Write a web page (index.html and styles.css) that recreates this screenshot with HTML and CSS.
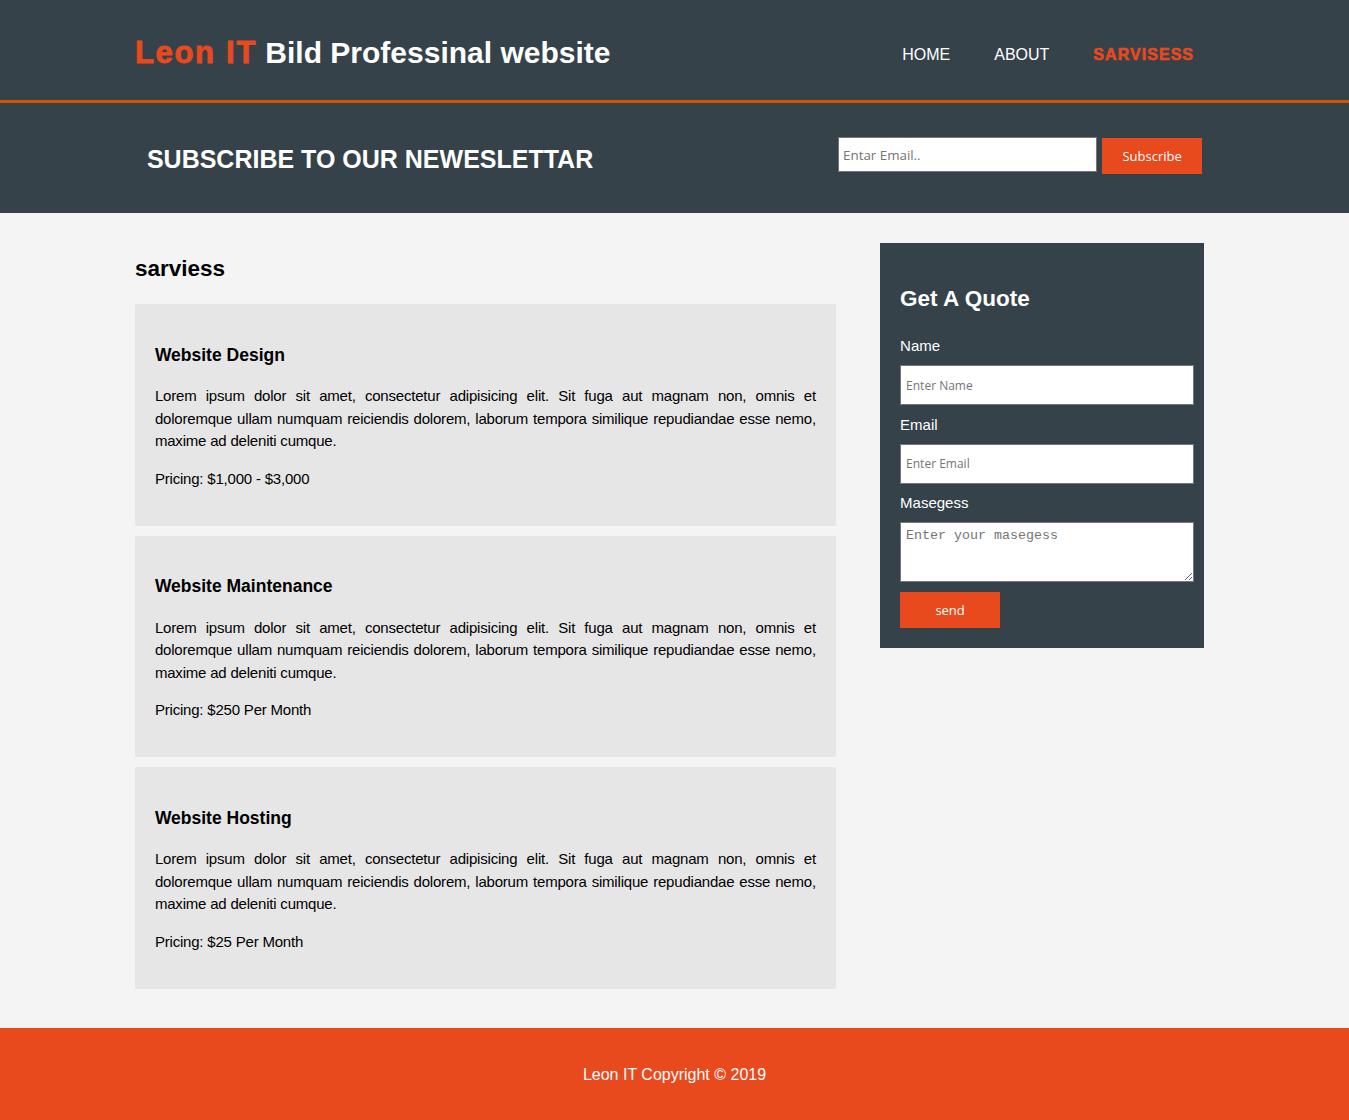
FILE: index.html
```
<!DOCTYPE html>
<html lang="en">
<head>
<meta charset="utf-8">
<title>Leon IT | Sarvisess</title>
<link rel="stylesheet" href="styles.css">
</head>
<body>
<header class="site-header">
  <div class="container header-inner">
    <h1 class="branding"><span class="highlight">Leon IT</span> Bild Professinal website</h1>
    <nav class="nav">
      <ul class="nav-list">
        <li><a href="#">Home</a></li>
        <li><a href="#">About</a></li>
        <li class="current"><a href="#">Sarvisess</a></li>
      </ul>
    </nav>
  </div>
</header>

<section class="newsletter">
  <div class="newsletter-inner">
    <h1 class="newsletter-title">SUBSCRIBE TO OUR NEWESLETTAR</h1>
    <form class="newsletter-form">
      <input class="newsletter-input" type="email" placeholder="Entar Email..">
      <button class="btn-subscribe" type="button">Subscribe</button>
    </form>
  </div>
</section>

<section class="main">
  <div class="container main-inner">
    <article class="main-col">
      <h1 class="page-title">sarviess</h1>
      <ul class="services">
        <li class="service">
          <h3 class="service-title">Website Design</h3>
          <p class="service-text">Lorem ipsum dolor sit amet, consectetur adipisicing elit. Sit fuga aut magnam non, omnis et doloremque ullam numquam reiciendis dolorem, laborum tempora similique repudiandae esse nemo, maxime ad deleniti cumque.</p>
          <p class="service-price">Pricing: $1,000 - $3,000</p>
        </li>
        <li class="service">
          <h3 class="service-title">Website Maintenance</h3>
          <p class="service-text">Lorem ipsum dolor sit amet, consectetur adipisicing elit. Sit fuga aut magnam non, omnis et doloremque ullam numquam reiciendis dolorem, laborum tempora similique repudiandae esse nemo, maxime ad deleniti cumque.</p>
          <p class="service-price">Pricing: $250 Per Month</p>
        </li>
        <li class="service">
          <h3 class="service-title">Website Hosting</h3>
          <p class="service-text">Lorem ipsum dolor sit amet, consectetur adipisicing elit. Sit fuga aut magnam non, omnis et doloremque ullam numquam reiciendis dolorem, laborum tempora similique repudiandae esse nemo, maxime ad deleniti cumque.</p>
          <p class="service-price">Pricing: $25 Per Month</p>
        </li>
      </ul>
    </article>

    <aside class="sidebar">
      <div class="dark">
        <h1 class="quote-title">Get A Quote</h1>
        <form class="quote">
          <label class="quote-label">Name</label>
          <input class="quote-input" type="text" placeholder="Enter Name">
          <label class="quote-label">Email</label>
          <input class="quote-input" type="email" placeholder="Enter Email">
          <label class="quote-label">Masegess</label>
          <textarea class="quote-textarea" placeholder="Enter your masegess"></textarea>
          <button class="btn-send" type="button">send</button>
        </form>
      </div>
    </aside>
  </div>
</section>

<footer class="footer">
  <p class="footer-text">Leon IT Copyright &copy; 2019</p>
</footer>
</body>
</html>
```

FILE: styles.css
```
* {
  box-sizing: border-box;
}

body {
  margin: 0;
  padding: 0;
  font: 15px/1.5 "Liberation Sans", Arial, Helvetica, sans-serif;
  background: #f4f4f4;
  color: #000;
}

.container {
  width: 80%;
  margin: 0 auto;
}

/* Header */
.site-header {
  background: #35424a;
  color: #fff;
  padding-top: 30px;
  height: 103px;
  border-bottom: 3px solid #d35400;
}

.header-inner {
  display: flex;
  justify-content: space-between;
  align-items: flex-start;
}

.branding {
  margin: 0;
  font-size: 30px;
  line-height: 46px;
  font-weight: bold;
}

.highlight {
  color: #e8491d;
  font-size: 31px;
  letter-spacing: 1.7px;
  -webkit-text-stroke: 0.9px #e8491d;
}

.nav {
  margin-top: 13px;
}

.nav-list {
  list-style: none;
  margin: 0;
  padding: 0;
  display: flex;
  gap: 4px;
}

.nav-list li {
  padding: 0 20px;
}

.nav-list a {
  color: #fff;
  text-decoration: none;
  text-transform: uppercase;
  font-size: 16px;
  line-height: 24px;
}

.nav-list .current a {
  color: #e8491d;
  font-weight: bold;
  letter-spacing: 1.05px;
  -webkit-text-stroke: 0.6px #e8491d;
}

/* Newsletter */
.newsletter {
  background: #35424a;
  color: #fff;
  padding: 15px;
  height: 110px;
}

.newsletter-inner {
  width: 80%;
  margin: 0 auto;
  display: flex;
  justify-content: space-between;
  align-items: flex-start;
}

.newsletter-title {
  margin: 23px 0 0;
  font-size: 25px;
  line-height: 37px;
  font-weight: bold;
}

.newsletter-form {
  display: flex;
  align-items: flex-start;
  gap: 5px;
  margin-top: 19px;
}

.newsletter-input {
  width: 259px;
  height: 35px;
  padding: 4px;
  border: 1px solid #767676;
  font: 13.33px "Open Sans", "DejaVu Sans", sans-serif;
  color: #000;
  background: #fff;
}

.newsletter-input::placeholder {
  color: #757575;
}

.btn-subscribe {
  width: 100px;
  height: 36px;
  margin-top: 1px;
  background: #e8491d;
  border: 0;
  color: #fff;
  font: 13px "Open Sans", "DejaVu Sans", sans-serif;
  padding: 0;
}

/* Main */
.main {
  padding-bottom: 39px;
}

.main-inner {
  display: flex;
  justify-content: space-between;
  align-items: flex-start;
}

.main-col {
  width: 701px;
}

.page-title {
  margin: 39px 0 18px;
  font-size: 22.5px;
  line-height: 34px;
  font-weight: bold;
}

.services {
  list-style: none;
  margin: 0;
  padding: 0;
  display: flex;
  flex-direction: column;
  gap: 10px;
}

.service {
  background: #e6e6e6;
  padding: 20px 20px 20.5px;
  border-radius: 2px;
}

.service-title {
  margin: 17.5px 0;
  font-size: 17.5px;
  line-height: 26px;
  font-weight: bold;
}

.service-text {
  margin: 15px 0;
  text-align: justify;
  letter-spacing: -0.2px;
}

.service-price {
  margin: 15px 0;
  letter-spacing: -0.2px;
}

/* Sidebar */
.sidebar {
  width: 324px;
  margin-top: 30px;
  margin-right: 10px;
}

.dark {
  background: #35424a;
  color: #fff;
  padding: 20px;
}

.quote-title {
  margin: 19px 0 19px;
  font-size: 22.5px;
  line-height: 34px;
  font-weight: bold;
}

.quote {
  display: flex;
  flex-direction: column;
  align-items: flex-start;
}

.quote-label {
  display: block;
  line-height: 22.5px;
  margin-bottom: 7.5px;
}

.quote-input {
  width: 294px;
  height: 40px;
  padding: 5px;
  border: 1px solid #767676;
  margin-bottom: 8.5px;
  font: 12px "Open Sans", "DejaVu Sans", sans-serif;
  background: #fff;
}

.quote-input::placeholder,
.quote-textarea::placeholder {
  color: #757575;
}

.quote-textarea {
  width: 294px;
  height: 60px;
  padding: 5px;
  border: 1px solid #767676;
  margin-bottom: 10px;
  font: 13.33px "Liberation Mono", "Courier New", monospace;
  background: #fff;
}

.btn-send {
  width: 100px;
  height: 36px;
  background: #e8491d;
  border: 0;
  color: #fff;
  font: 13px "Open Sans", "DejaVu Sans", sans-serif;
  padding: 0;
}

/* Footer */
.footer {
  background: #e8491d;
  color: #fff;
  text-align: center;
  padding: 20px;
  height: 92px;
}

.footer-text {
  margin: 15px 0 0;
  font-size: 16px;
  line-height: 24px;
}
```
